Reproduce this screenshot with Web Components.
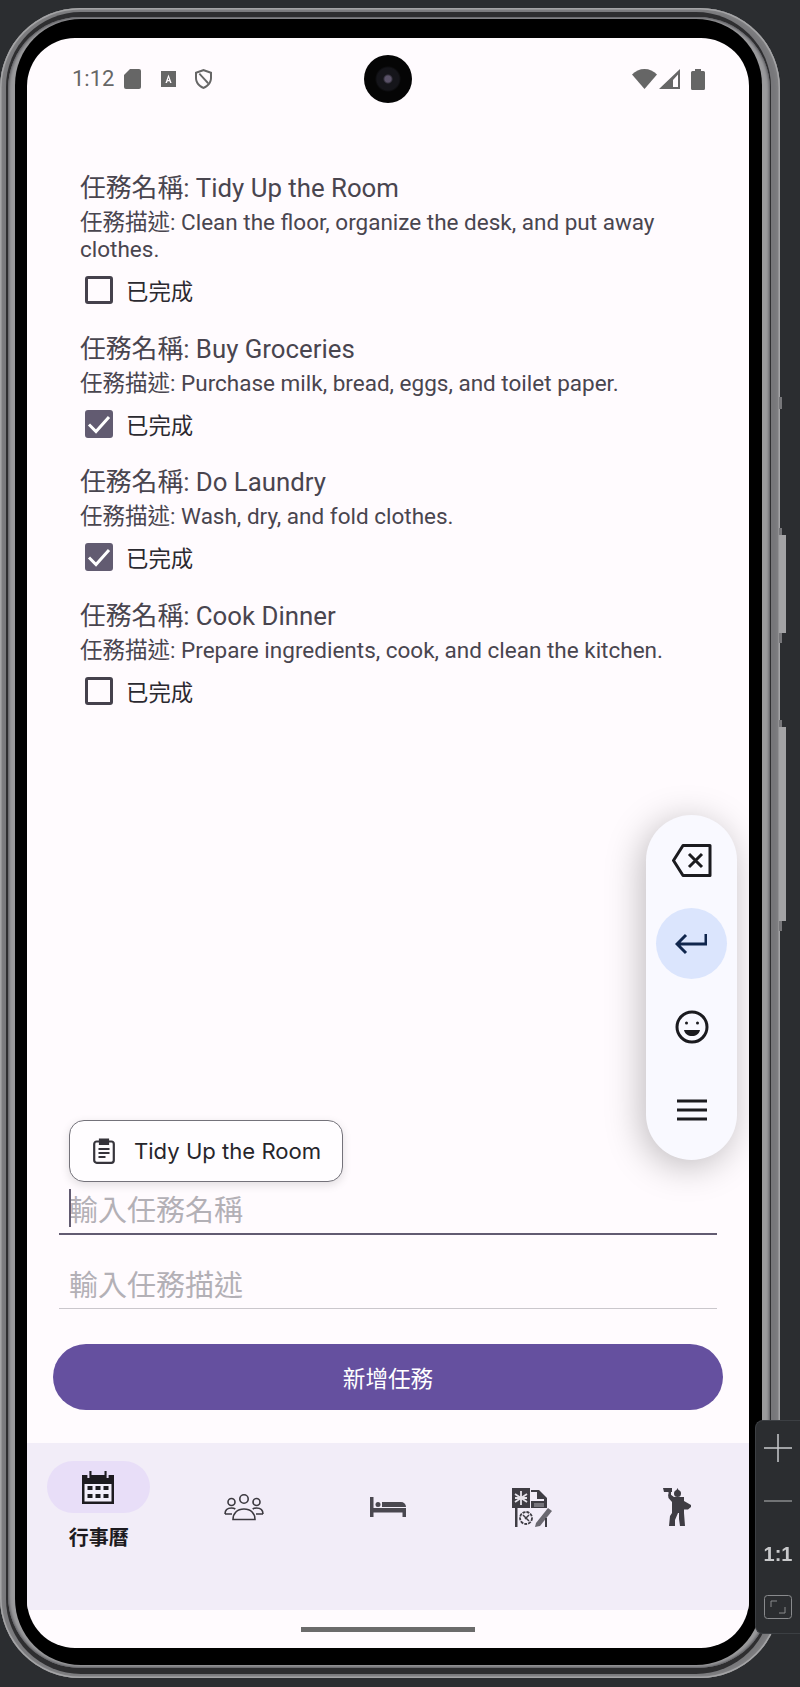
<!DOCTYPE html>
<html>
<head>
<meta charset="utf-8">
<style>
  html, body { margin: 0; height: 100%; background: #2b2d30; overflow: hidden; }
  body { font-family: Roboto, "Noto Sans CJK TC", sans-serif; }
</style>
</head>
<body>
<phone-frame>
  <status-bar></status-bar>
  <task-list>
    <task-item name="Tidy Up the Room" desc="Clean the floor, organize the desk, and put away clothes."></task-item>
    <task-item name="Buy Groceries" desc="Purchase milk, bread, eggs, and toilet paper." done></task-item>
    <task-item name="Do Laundry" desc="Wash, dry, and fold clothes." done></task-item>
    <task-item name="Cook Dinner" desc="Prepare ingredients, cook, and clean the kitchen."></task-item>
  </task-list>
  <task-form></task-form>
  <bottom-nav></bottom-nav>
  <home-bar></home-bar>
  <floating-keys slot="overlay"></floating-keys>
</phone-frame>
<zoom-toolbar></zoom-toolbar>

<script>
/**
 * Device frame: bezel rings around the screen, side keys on the right edge
 */
class PhoneFrame extends HTMLElement {
  constructor() {
    super();
    this.attachShadow({ mode: 'open' });
    this.shadowRoot.innerHTML = `
      <style>
        :host {
          display: block;
          position: relative;
          box-sizing: border-box;
          width: 780px;
          height: 1670px;
          margin-top: 8px;
          padding: 4px 9px 4px 6px;
          border-radius: 80px;
          background: #77777a;
          box-shadow: inset 0 0 0 1.500px #a4a4a6, inset 0 0 5px 2px #88888a;
        }
        .gap {
          box-sizing: border-box;
          height: 100%;
          padding: 5px 1px 6px 2px;
          border-radius: 75px;
          background: #2e2e30;
        }
        .band {
          box-sizing: border-box;
          height: 100%;
          padding: 2px 8px 3px 7px;
          border-radius: 72px;
          background: #9a9a9c;
          box-shadow: inset 0 0 3px 1px #55555a;
        }
        .bezel {
          box-sizing: border-box;
          height: 100%;
          padding: 19px 13px 17px 12px;
          border-radius: 66px;
          background: #000;
        }
        .screen {
          position: relative;
          height: 100%;
          display: flex;
          flex-direction: column;
          border-radius: 48px;
          overflow: hidden;
          background: #fffbfe;
          color: #49454f;
        }
        .key {
          position: absolute;
          right: -2px;
          width: 3px;
          background: #77777a;
        }
        .key::before {
          content: '';
          position: absolute;
          right: -4px;
          top: 7px;
          bottom: 10px;
          width: 7px;
          background: #a3a3a5;
        }
        .stub { top: 389px; height: 12px; }
        .stub::before { display: none; }
        .power { top: 520px; height: 115px; }
        .volume { top: 712px; height: 211px; }
      </style>
      <div class="gap">
        <div class="band">
          <div class="bezel">
            <div class="screen">
              <slot></slot>
              <slot name="overlay"></slot>
            </div>
          </div>
        </div>
      </div>
      <span class="key stub"></span>
      <span class="key power"></span>
      <span class="key volume"></span>
    `;
  }
}

class StatusBar extends HTMLElement {
  constructor() {
    super();
    this.attachShadow({ mode: 'open' });
    this.shadowRoot.innerHTML = `
      <style>
        :host {
          display: flex;
          align-items: center;
          flex: none;
          height: 82px;
          padding: 0 44px 0 45px;
          color: #666;
          font: 22px/1 Roboto, sans-serif;
          position: relative;
        }
        .left { display: flex; align-items: center; flex: 1; }
        .right { display: flex; align-items: center; gap: 2px; }
        svg { display: block; fill: #666; }
        .camera {
          position: absolute;
          left: 337px;
          top: 17px;
          width: 48px;
          height: 48px;
          border-radius: 50%;
          background: radial-gradient(circle at 50% 50%, #5a5268 0 3px, #15151a 5px 11px, #050505 13px);
        }
      </style>
      <div class="left">
        <span>1:12</span>
        <svg style="margin-left:10px" width="17" height="20" viewBox="0 0 17 20"><path d="M6 0h9a2 2 0 0 1 2 2v16a2 2 0 0 1-2 2H2a2 2 0 0 1-2-2V6z"/></svg>
        <svg style="margin-left:20px" width="15" height="16" viewBox="0 0 15 16"><path fill-rule="evenodd" d="M0 0h15v16H0zM7.5 3.5 4.4 12H6l.6-1.8h1.9L9.1 12h1.5L7.5 3.5zM7.5 6.6l.6 2.3H6.9z"/></svg>
        <svg style="margin-left:19px" width="17" height="20" viewBox="0 0 17 20"><path fill-rule="evenodd" d="M8.5 0 17 3v6c0 5-3.600 9-8.500 11C3.600 18 0 14 0 9V3zM8.500 2.200 2 4.500V9c0 3.900 2.700 7.200 6.500 8.800 3.800-1.600 6.500-4.900 6.500-8.800V4.500z"/><path d="M3.700 5.300 5 4l8.800 9.600-1.300 1.300z"/></svg>
      </div>
      <span class="camera"></span>
      <div class="right">
        <svg width="25" height="20" viewBox="0 0 25 20"><path d="M12.500 20 0 5.500C3.400 2 7.700 0 12.500 0S21.600 2 25 5.500z"/></svg>
        <svg width="21" height="20" viewBox="0 0 21 20"><path fill-rule="evenodd" d="M21 0v20H0zM19 5.500 14 11v7h5z"/></svg>
        <svg style="margin-left:9px" width="14" height="21" viewBox="0 0 14 21"><path d="M4 0h6v2h2.500A1.500 1.500 0 0 1 14 3.500V19.500a1.500 1.500 0 0 1-1.500 1.500h-11A1.500 1.500 0 0 1 0 19.500V3.500A1.500 1.500 0 0 1 1.500 2H4z"/></svg>
      </div>
    `;
  }
}

class TaskList extends HTMLElement {
  constructor() {
    super();
    this.attachShadow({ mode: 'open' });
    this.shadowRoot.innerHTML = `
      <style>
        :host {
          display: flex;
          flex-direction: column;
          flex: 1;
          padding: 51px 53px 0;
        }
      </style>
      <slot></slot>
    `;
  }
}

/**
 * Single task: title, description and a done checkbox
 */
class TaskItem extends HTMLElement {
  static get observedAttributes() {
    return ['name', 'desc', 'done'];
  }

  constructor() {
    super();
    this.attachShadow({ mode: 'open' });
    this.render();
  }

  attributeChangedCallback(name, oldValue, newValue) {
    if (oldValue !== newValue) {
      this.render();
    }
  }

  render() {
    const done = this.hasAttribute('done');
    this.shadowRoot.innerHTML = `
      <style>
        :host {
          display: block;
          font-family: Roboto, "Noto Sans CJK TC", sans-serif;
          color: #49454f;
        }
        .name { font-size: 25.800px; line-height: 34px; }
        .desc { font-size: 22.500px; line-height: 27px; margin-top: 4px; }
        .check { display: flex; align-items: center; height: 48px; margin-top: 3px; margin-bottom: 17.500px; padding-left: 5px; }
        .box {
          box-sizing: border-box;
          width: 28px;
          height: 28px;
          border: 3px solid #45414c;
          border-radius: 3px;
          display: flex;
          align-items: center;
          justify-content: center;
        }
        .box.on { background: #625b71; border-color: #625b71; }
        .label { margin-left: 13px; font-size: 22.400px; color: #2b2930; }
        svg { display: block; flex: none; }
      </style>
      <div class="name">任務名稱: ${this.getAttribute('name') || ''}</div>
      <div class="desc">任務描述: ${this.getAttribute('desc') || ''}</div>
      <div class="check">
        <span class="box ${done ? 'on' : ''}">
          ${done ? '<svg width="24" height="24" viewBox="0 0 24 24"><path d="M2 12.500 9 19.500 22 5" fill="none" stroke="#fff" stroke-width="3"/></svg>' : ''}
        </span>
        <span class="label">已完成</span>
      </div>
    `;
  }
}

/**
 * Inputs, clipboard suggestion chip and submit button
 */
class TaskForm extends HTMLElement {
  constructor() {
    super();
    this.attachShadow({ mode: 'open' });
    this.shadowRoot.innerHTML = `
      <style>
        :host {
          display: block;
          flex: none;
          position: relative;
          padding: 0 26px 33px 26px;
          font-family: Roboto, "Noto Sans CJK TC", sans-serif;
        }
        .field {
          box-sizing: border-box;
          height: 52px;
          margin: 0 6px;
          padding: 0 10px;
          display: flex;
          align-items: center;
          font-size: 29px;
          color: #b3b0b6;
          border-bottom: 1px solid #cac7cc;
        }
        .field + .field { margin-top: 22px; }
        .field.focus { border-bottom: 2px solid #625b71; position: relative; }
        .caret {
          position: absolute;
          left: 10px;
          top: 6px;
          width: 2px;
          height: 38px;
          background: #625b71;
        }
        .submit {
          margin-top: 35px;
          height: 66px;
          border-radius: 33px;
          background: #65509f;
          color: #fff;
          display: flex;
          align-items: center;
          justify-content: center;
          font-size: 22.600px;
        }
        .chip {
          position: absolute;
          left: 42px;
          top: -63px;
          box-sizing: border-box;
          width: 274px;
          height: 62px;
          display: flex;
          align-items: center;
          gap: 19px;
          padding-left: 23px;
          background: #fffdff;
          border: 1px solid #74727a;
          border-radius: 15px;
          box-shadow: 0 3px 10px rgba(0,0,0,0.12);
          color: #26252a;
          font-size: 22.100px;
          font-family: Inter, Roboto, sans-serif;
        }
        svg { display: block; flex: none; }
      </style>
      <div class="chip">
        <svg width="22" height="26" viewBox="0 0 22 26" fill="none" stroke="#36343b" stroke-width="2.200">
          <rect x="1.200" y="3.500" width="19.600" height="21.300" rx="2.500"/>
          <path d="M7 1.500h8v4.500H7z" fill="#36343b"/>
          <path d="M5.500 11h11M5.500 15h11M5.500 19h7"/>
        </svg>
        <span>Tidy Up the Room</span>
      </div>
      <div class="field focus"><span class="caret"></span>輸入任務名稱</div>
      <div class="field">輸入任務描述</div>
      <div class="submit">新增任務</div>
    `;
  }
}

class BottomNav extends HTMLElement {
  constructor() {
    super();
    this.attachShadow({ mode: 'open' });
    this.shadowRoot.innerHTML = `
      <style>
        :host {
          display: grid;
          grid-template-columns: repeat(5, 1fr);
          flex: none;
          height: 167px;
          background: #f2edf8;
          color: #1d1b20;
          font-family: Roboto, "Noto Sans CJK TC", sans-serif;
        }
        .tab { display: flex; flex-direction: column; align-items: center; padding-top: 18px; }
        .pill {
          width: 103px;
          height: 52px;
          margin-left: -2px;
          border-radius: 26px;
          background: #e8def8;
          display: flex;
          align-items: center;
          justify-content: center;
        }
        .label { margin-top: 11px; margin-left: -1px; font-size: 20px; font-weight: 700; line-height: 28px; }
        .slot { width: 103px; height: 52px; display: flex; align-items: center; justify-content: center; margin-top: 20px; }
        svg { display: block; }
      </style>
      <div class="tab">
        <div class="pill">
          <svg width="32" height="33" viewBox="0 0 32 33">
            <path fill="#f3effb" d="M2 12h28v20H2z"/>
            <path fill="#1d1b20" d="M7 0h2.500v4h13V0H25v4h7v29H0V4h7zM2.500 13v17.500h27V13z"/>
            <path fill="#e8def8" d="M5.400 0h2v7h-2zM24.600 0h2v7h-2z"/>
            <path fill="#1d1b20" d="M5.500 15h5v4h-5zM13.500 15h5v4h-5zM21.500 15h5v4h-5zM5.500 23h5v4h-5zM13.500 23h5v4h-5zM21.500 23h5v4h-5z"/>
          </svg>
        </div>
        <div class="label">行事曆</div>
      </div>
      <div class="tab">
        <div class="slot">
          <svg width="40" height="27" viewBox="0 0 40 27" fill="none" stroke="#3c3a40" stroke-width="1.600">
            <circle cx="20" cy="5" r="4.200"/><circle cx="7.500" cy="8" r="3.500"/><circle cx="32.500" cy="8" r="3.500"/>
            <path d="M1 20c0-4 2.500-6 6.500-6 1.500 0 2.800.3 3.800 1M39 20c0-4-2.500-6-6.500-6-1.500 0-2.800.3-3.800 1M1 20h7M32 20h7"/>
            <path d="M9 25.500c0-6 4-10.500 11-10.500s11 4.500 11 10.500z"/>
          </svg>
        </div>
      </div>
      <div class="tab">
        <div class="slot">
          <svg width="36" height="20" viewBox="0 0 36 20" fill="#4a4850">
            <path d="M0 0h3.500v11h32.500v9h-3.500v-4.500H3.500V20H0z"/>
            <circle cx="8" cy="7.500" r="2.500"/>
            <path d="M12 5h19a5 5 0 0 1 5 5H12z"/>
          </svg>
        </div>
      </div>
      <div class="tab">
        <div class="slot">
          <svg width="40" height="39" viewBox="0 0 40 39" fill="#3f3d44">
            <path d="M0 0h18v20H0z"/>
            <path d="M9 3v14M3 6l12 8M15 6 3 14M3 10h12" stroke="#e6e3ea" stroke-width="1.800"/>
            <path d="M3 20h2.500v19H3z"/>
            <path d="M19 2h8l8 8v10H19v-7h13v-2h-7V4h-6z"/>
            <path d="M22 15h10v4H22z" fill="#77757c"/>
            <circle cx="14" cy="30" r="6" fill="none" stroke="#3f3d44" stroke-width="1.800" stroke-dasharray="3 1"/>
            <path d="M11 27l6 6M17 27l-4 4" fill="none" stroke="#3f3d44" stroke-width="1.500"/>
            <path d="M24 35 36 20l4 3-12 15-5 1z" fill="#6a6870"/>
            <path d="M33 30h2v9h-2z"/>
          </svg>
        </div>
      </div>
      <div class="tab">
        <div class="slot">
          <svg width="28" height="39" viewBox="0 0 28 39" fill="#3f3d44">
            <path d="M0 0h9v4H8v3H5.500v-3H1z"/>
            <circle cx="14.500" cy="5.500" r="3.500"/>
            <path d="M14.500 0l1.500 3h-3z"/>
            <path d="M5 6.500h2.500L11 9h10v4l7 4v2l-3 2.500H21V25H9V14L5.500 10z"/>
            <path d="M9 25h6l-3 7v6H6l1-10zM16 25h5l1 13h-5l-1-7z"/>
          </svg>
        </div>
      </div>
    `;
  }
}

class HomeBar extends HTMLElement {
  constructor() {
    super();
    this.attachShadow({ mode: 'open' });
    this.shadowRoot.innerHTML = `
      <style>
        :host {
          display: flex;
          flex: none;
          height: 38px;
          box-sizing: border-box;
          justify-content: center;
          padding-top: 17px;
        }
        span { width: 174px; height: 5px; background: #6b6b6b; }
      </style>
      <span></span>
    `;
  }
}

/**
 * Floating keyboard pill that sits over the page content
 */
class FloatingKeys extends HTMLElement {
  constructor() {
    super();
    this.attachShadow({ mode: 'open' });
    this.shadowRoot.innerHTML = `
      <style>
        :host {
          position: absolute;
          left: 619px;
          top: 777px;
          width: 91px;
          height: 345px;
          border-radius: 46px;
          background: #f9f9ff;
          box-shadow: -4px 6px 36px rgba(0,0,0,0.26);
          display: flex;
          flex-direction: column;
          align-items: center;
          padding-top: 10px;
          box-sizing: border-box;
        }
        .key { flex: none; width: 71px; height: 71px; margin-bottom: 12px; border-radius: 50%; display: flex; align-items: center; justify-content: center; }
        .key.on { background: #dbe5fd; }
        svg { display: block; fill: none; stroke: #1b1b1f; stroke-width: 3; }
      </style>
      <div class="key">
        <svg width="40" height="33" viewBox="0 0 40 33"><path d="M11 1.500h27v30H11L1.500 16.500z" stroke-linejoin="round"/><path d="M17 10l13 13M30 10 17 23"/></svg>
      </div>
      <div class="key on">
        <svg width="32" height="22" viewBox="0 0 32 22" style="stroke:#10264d;margin-left:-2px"><path d="M31 1v10H3M11 2 2 11l9 9"/></svg>
      </div>
      <div class="key">
        <svg width="34" height="34" viewBox="0 0 34 34"><circle cx="17" cy="17" r="15"/><circle cx="11.500" cy="13" r="1.500" fill="#1b1b1f" stroke="none"/><circle cx="22.500" cy="13" r="1.500" fill="#1b1b1f" stroke="none"/><path d="M9 20h16c-1 4-4 6-8 6s-7-2-8-6z" fill="#1b1b1f" stroke="none"/></svg>
      </div>
      <div class="key">
        <svg width="30" height="22" viewBox="0 0 30 22"><path d="M0 2h30M0 11h30M0 20h30"/></svg>
      </div>
    `;
  }
}

/**
 * Emulator zoom controls over the right edge of the window
 */
class ZoomToolbar extends HTMLElement {
  constructor() {
    super();
    this.attachShadow({ mode: 'open' });
    this.shadowRoot.innerHTML = `
      <style>
        :host {
          position: fixed;
          left: 755px;
          top: 1420px;
          width: 45px;
          height: 214px;
          box-sizing: border-box;
          background: #2b2d30;
          border: 1px solid #3c3f43;
          border-right: 0;
          border-radius: 8px 0 0 8px;
          display: flex;
          flex-direction: column;
          align-items: center;
          color: #c8c9cb;
          font: 700 20px/1 "Liberation Sans", sans-serif;
        }
        .btn { height: 53px; display: flex; align-items: center; justify-content: center; flex: none; width: 100%; }
        svg { display: block; fill: none; stroke: currentColor; }
      </style>
      <div class="btn"><svg width="28" height="28" viewBox="0 0 28 28" stroke-width="1.500"><path d="M14 0v28M0 14h28"/></svg></div>
      <div class="btn"><svg width="28" height="2" viewBox="0 0 28 2" stroke-width="1.500" style="opacity:.6"><path d="M0 1h28"/></svg></div>
      <div class="btn">1:1</div>
      <div class="btn"><svg width="28" height="24" viewBox="0 0 28 24" stroke-width="1" style="opacity:.6"><rect x=".5" y=".5" width="27" height="23" rx="3"/><path d="M7 12V6h6M21 12v6h-6"/></svg></div>
    `;
  }
}

customElements.define('phone-frame', PhoneFrame);
customElements.define('status-bar', StatusBar);
customElements.define('task-list', TaskList);
customElements.define('task-item', TaskItem);
customElements.define('task-form', TaskForm);
customElements.define('bottom-nav', BottomNav);
customElements.define('home-bar', HomeBar);
customElements.define('floating-keys', FloatingKeys);
customElements.define('zoom-toolbar', ZoomToolbar);
</script>
</body>
</html>
